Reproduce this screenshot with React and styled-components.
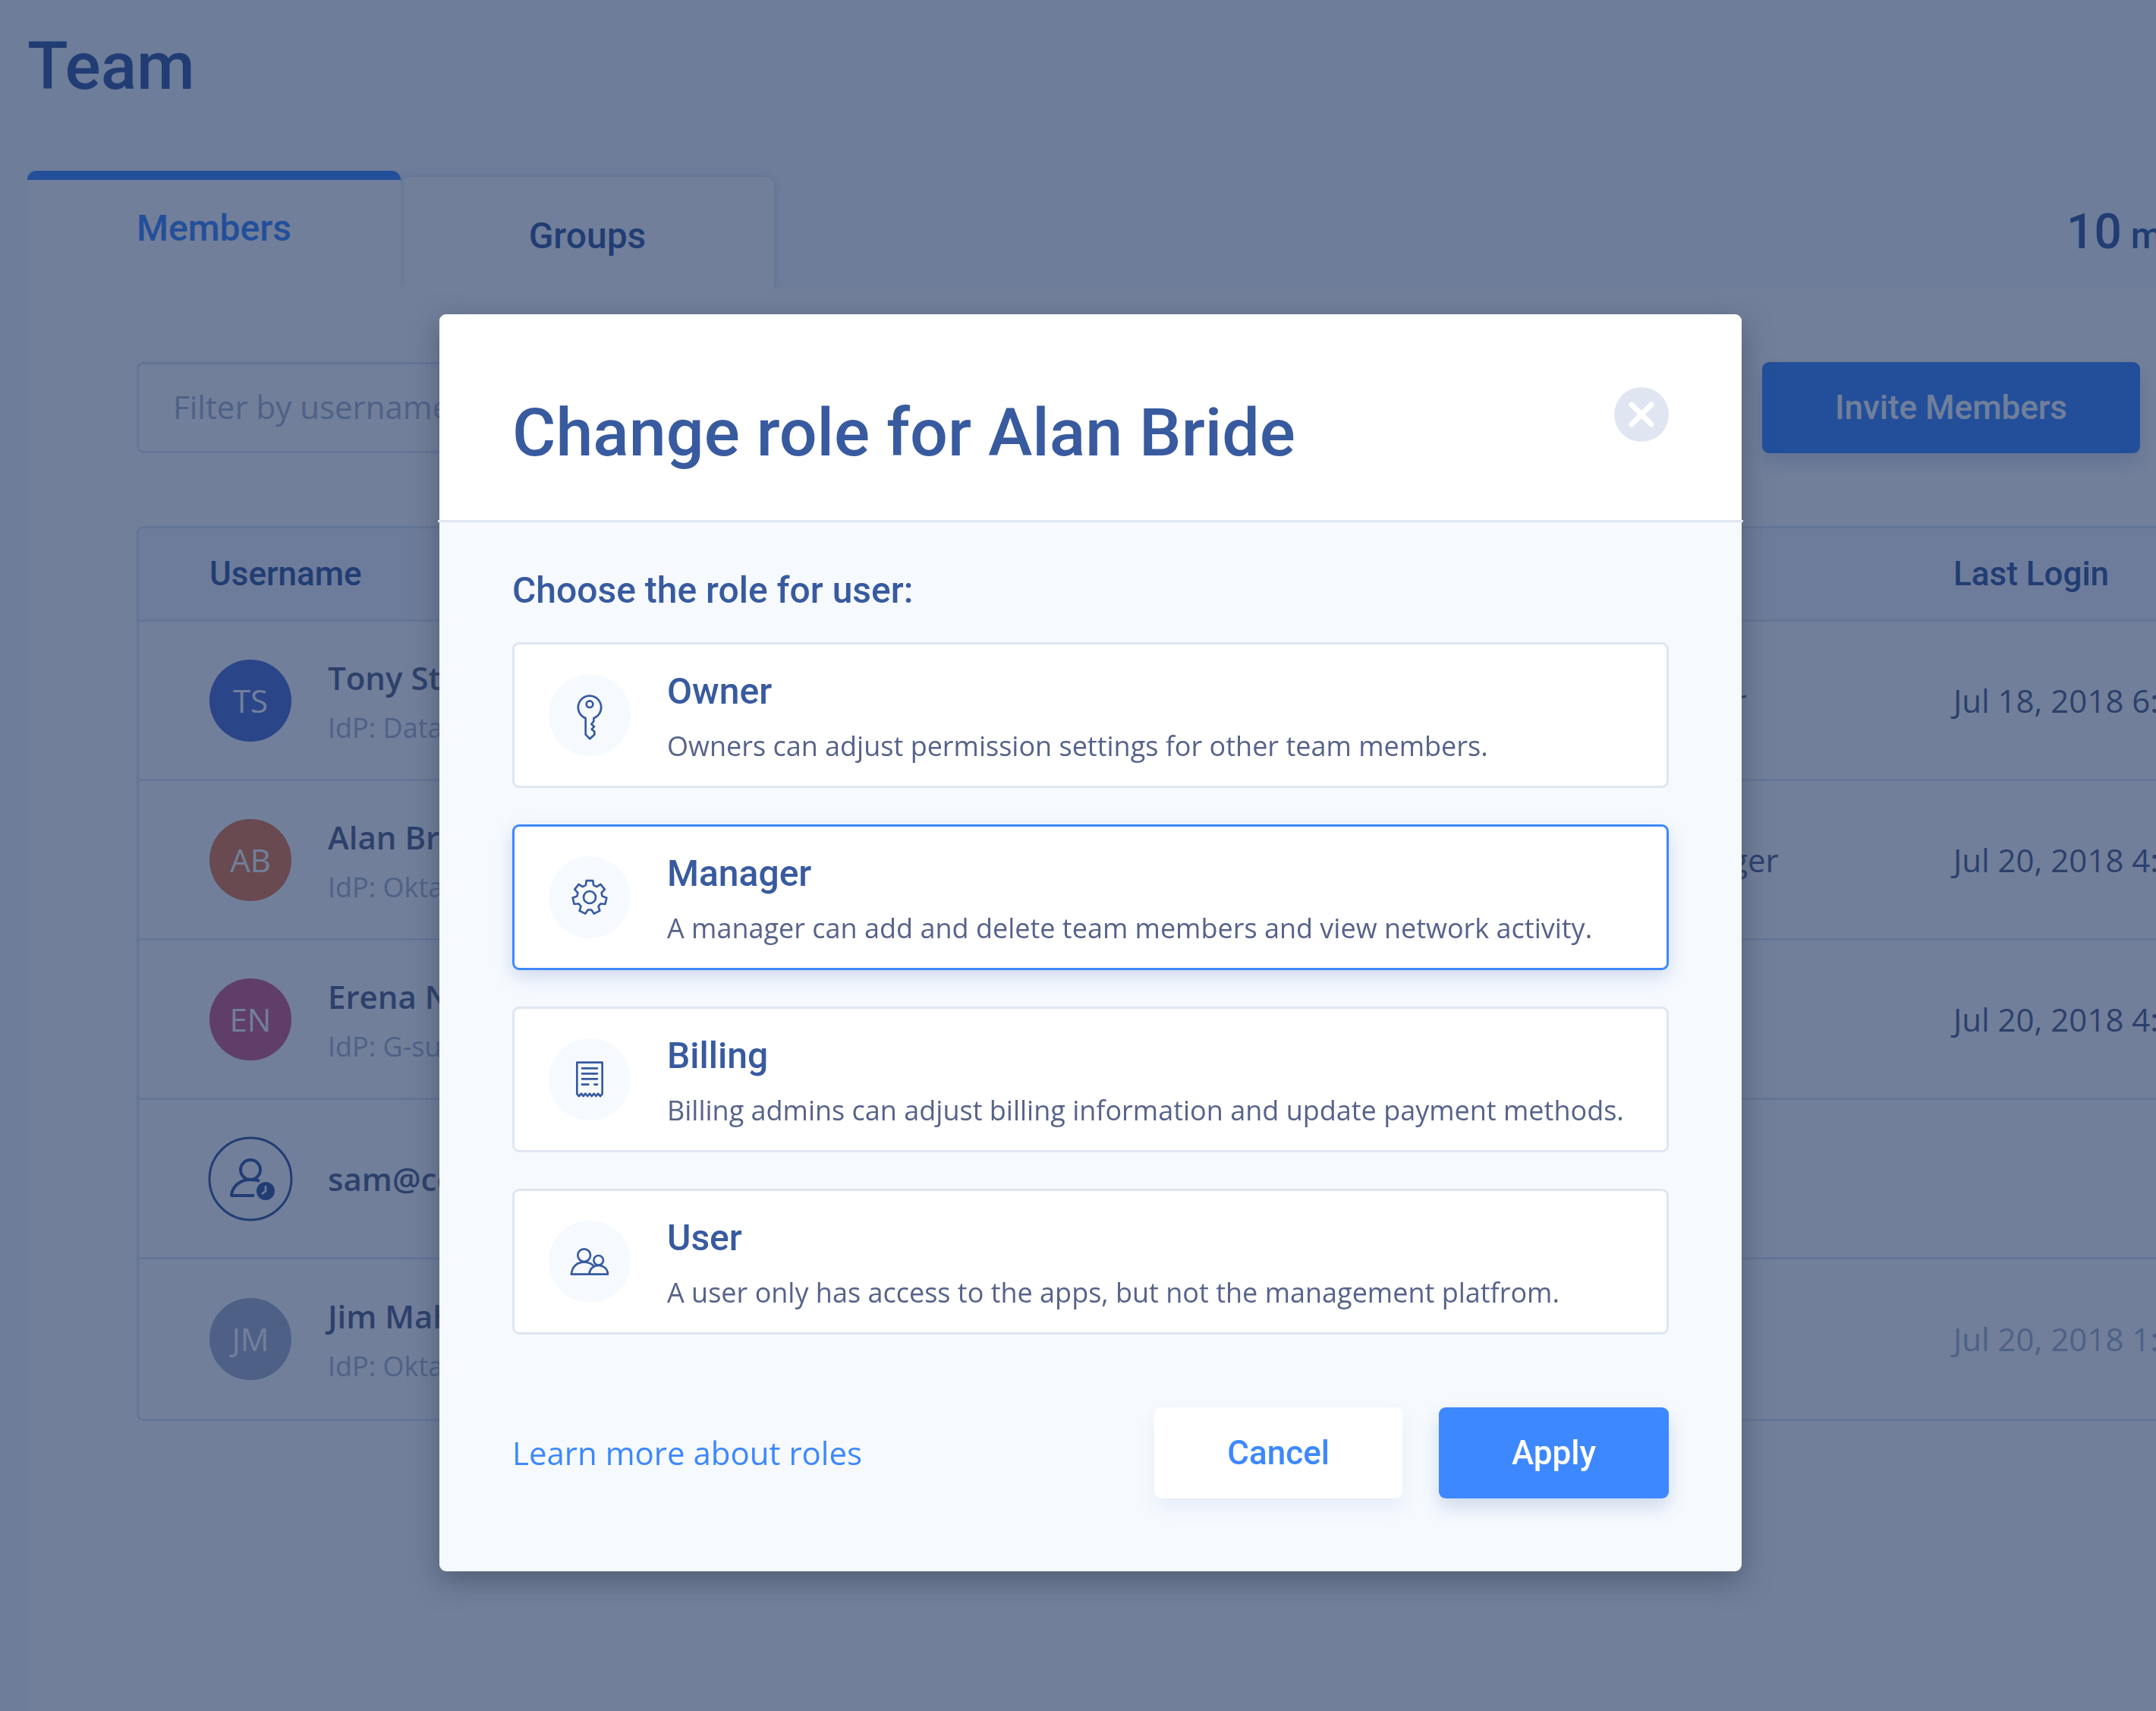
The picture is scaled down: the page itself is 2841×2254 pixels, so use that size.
import React, { useState } from 'react'
import styled, { createGlobalStyle, css } from 'styled-components'

const colors = {
  blue: '#3d88ff',
  navy: '#385a9f',
  text: '#56638a',
  muted: '#abb4ce',
  border: '#dfe6f2',
  pale: '#f6faff',
  white: '#ffffff'
}

const headingFont = "Roboto, 'Liberation Sans', sans-serif"
const bodyFont = "'Open Sans', 'Noto Sans', sans-serif"

const members = [
  { name: 'Tony Stark', initials: 'TS', color: '#526ed4', idp: 'Database', role: 'Owner', login: 'Jul 18, 2018 6:' },
  { name: 'Alan Bride', initials: 'AB', color: '#e87a48', idp: 'Okta', role: 'Manager', login: 'Jul 20, 2018 4:' },
  { name: 'Erena Nile', initials: 'EN', color: '#d45c88', idp: 'G-suite', role: '', login: 'Jul 20, 2018 4:' },
  { name: 'sam@company', pending: true, role: '', login: '' },
  { name: 'Jim Mahn', initials: 'JM', color: '#a8b2cc', idp: 'Okta', role: '', login: 'Jul 20, 2018 1:', inactive: true }
]

// gear outline: seven teeth, each with two outer and two inner corners
const gearPoints = Array.from({ length: 7 })
  .map((_, i) =>
    [[-18, 50], [-11, 67], [11, 67], [18, 50]]
      .map(([offset, radius]) => {
        const angle = (((i * 360) / 7 + offset) * Math.PI) / 180
        return `${(radius * Math.sin(angle)).toFixed(1)},${(-radius * Math.cos(angle)).toFixed(1)}`
      })
      .join(' ')
  )
  .join(' ')

function KeyIcon() {
  return (
    <RoleSvg viewBox="-162 -162 324 324" aria-hidden="true">
      <path d="M-16 12A45.5 45.5 0 1 1 16 12V24L7 36L18 46L8 56L19 65V77L1 94L-16 77Z" />
      <circle cx="0" cy="-43" r="13" />
    </RoleSvg>
  )
}

function GearIcon() {
  return (
    <RoleSvg viewBox="-162 -162 324 324" aria-hidden="true">
      <polygon points={gearPoints} />
      <circle cx="0" cy="0" r="24" />
    </RoleSvg>
  )
}

function ReceiptIcon() {
  return (
    <RoleSvg viewBox="-162 -162 324 324" aria-hidden="true">
      <path d="M-50 57V-67H50V57L42 66L33 56L25 66L17 56L8 66L0 56L-8 66L-17 56L-25 66L-33 56L-42 66Z" />
      <path d="M-30 -44H30M-30 -23H30M-30 -2H30M-30 20H-5M19 20H30" />
    </RoleSvg>
  )
}

function UsersIcon() {
  return (
    <RoleSvg viewBox="-162 -162 324 324" aria-hidden="true">
      <circle cx="-22" cy="-25" r="25" />
      <path d="M-72 50C-70 20 -50 2 -22 2C-8 2 4 6 14 15" />
      <circle cx="35" cy="-5" r="19" />
      <path d="M-2 50C0 28 16 15 35 15C54 15 71 28 72 50H-72" />
    </RoleSvg>
  )
}

function PendingAvatar() {
  return (
    <PendingSvg viewBox="-54 -54 108 108" aria-label="Pending invitation">
      <circle cx="0" cy="0" r="54" strokeWidth="3" />
      <circle cx="0" cy="-12" r="13" />
      <path d="M12 3C8 1 4 1 0 1C-13 1 -24 9 -25 22H5" />
      <circle cx="20" cy="16" r="12" fill={colors.navy} stroke="none" />
      <path d="M20 9V16L15 20" stroke={colors.white} strokeWidth="2.5" />
    </PendingSvg>
  )
}

const roles = [
  { id: 'owner', title: 'Owner', text: 'Owners can adjust permission settings for other team members.', Icon: KeyIcon },
  {
    id: 'manager',
    title: 'Manager',
    text: 'A manager can add and delete team members and view network activity.',
    Icon: GearIcon
  },
  {
    id: 'billing',
    title: 'Billing',
    text: 'Billing admins can adjust billing information and update payment methods.',
    Icon: ReceiptIcon
  },
  {
    id: 'user',
    title: 'User',
    text: 'A user only has access to the apps, but not the management platfrom.',
    Icon: UsersIcon
  }
]

function MembersTable() {
  return (
    <TableFrame>
      <Table>
        <thead>
          <tr>
            <HeadCell>Username</HeadCell>
            <HeadCell width="404px"></HeadCell>
            <HeadCell width="267px">Last Login</HeadCell>
          </tr>
        </thead>
        <tbody>
          {members.map(member => (
            <tr key={member.name}>
              <Cell>
                <Member>
                  {member.pending ? <PendingAvatar /> : <Avatar color={member.color}>{member.initials}</Avatar>}
                  <MemberText>
                    <MemberName>{member.name}</MemberName>
                    {member.idp && <MemberIdp>IdP: {member.idp}</MemberIdp>}
                  </MemberText>
                </Member>
              </Cell>
              <Cell>{member.role}</Cell>
              <Cell $muted={member.inactive}>{member.login}</Cell>
            </tr>
          ))}
        </tbody>
      </Table>
    </TableFrame>
  )
}

function RoleDialog() {
  const [role, setRole] = useState('manager')

  return (
    <Dialog role="dialog" aria-modal="true" aria-labelledby="dialog-title">
      <DialogHeader>
        <DialogTitle id="dialog-title">Change role for Alan Bride</DialogTitle>
        <CloseButton type="button" aria-label="Close">
          <svg viewBox="0 0 72 72" aria-hidden="true">
            <path d="M23 23L49 49M49 23L23 49" />
          </svg>
        </CloseButton>
      </DialogHeader>
      <Divider />
      <DialogBody>
        <Prompt id="role-prompt">Choose the role for user:</Prompt>
        <RoleList role="radiogroup" aria-labelledby="role-prompt">
          {roles.map(({ id, title, text, Icon }) => (
            <RoleCard key={id} $selected={role === id}>
              <RoleInput type="radio" name="role" value={id} checked={role === id} onChange={() => setRole(id)} />
              <RoleCircle>
                <Icon />
              </RoleCircle>
              <RoleText>
                <RoleTitle>{title}</RoleTitle>
                <RoleDescription>{text}</RoleDescription>
              </RoleText>
            </RoleCard>
          ))}
        </RoleList>
        <DialogFooter>
          <LearnMore href="#roles">Learn more about roles</LearnMore>
          <Actions>
            <Button type="button">Cancel</Button>
            <Button type="button" $primary>
              Apply
            </Button>
          </Actions>
        </DialogFooter>
      </DialogBody>
    </Dialog>
  )
}

export default function App() {
  return (
    <>
      <GlobalStyle />
      <Page>
        <PageTitle>Team</PageTitle>
        <TabBar>
          <Tab type="button" $active>
            Members
          </Tab>
          <Tab type="button">Groups</Tab>
          <Counter>
            <CounterValue>10</CounterValue> members
          </Counter>
        </TabBar>
        <Panel>
          <Toolbar>
            <FilterInput type="text" aria-label="Filter members" placeholder="Filter by username" />
            <Button type="button" $primary>
              Invite Members
            </Button>
          </Toolbar>
          <MembersTable />
        </Panel>
      </Page>
      <Overlay>
        <RoleDialog />
      </Overlay>
    </>
  )
}

const GlobalStyle = createGlobalStyle`
  * {
    box-sizing: border-box;
  }
  body {
    margin: 0;
    background-color: ${colors.pale};
    color: ${colors.text};
    font-family: ${bodyFont};
    overflow: hidden;
  }
  button, input {
    font: inherit;
  }
`

const Page = styled.main`
  display: flex;
  flex-direction: column;
  min-height: 100vh;
  padding: 39px 0 0 36px;
  overflow: hidden;
`

const PageTitle = styled.h1`
  margin: 0 0 90px;
  color: ${colors.navy};
  font-family: ${headingFont};
  font-size: 88px;
  font-weight: 500;
  line-height: 96px;
`

const TabBar = styled.div`
  display: flex;
  align-items: flex-end;
`

const Tab = styled.button`
  flex: none;
  width: 492px;
  height: 147px;
  padding: 48px 0 39px;
  border: none;
  border-radius: 12px 12px 0 0;
  background-color: ${colors.white};
  box-shadow: 0 0 12px rgba(56, 90, 159, 0.2);
  color: ${colors.navy};
  font-family: ${headingFont};
  font-size: 48px;
  font-weight: 500;
  line-height: 60px;
  clip-path: inset(-12px -12px 0 0);

  ${props =>
    props.$active &&
    css`
      z-index: 1;
      height: 155px;
      padding: 33px 0 48px;
      border-top: 12px solid ${colors.blue};
      color: ${colors.blue};
      clip-path: inset(0 -12px 0 0);
    `}
`

const Counter = styled.div`
  flex: 0 0 118px;
  align-self: center;
  min-width: 0;
  margin-left: auto;
  padding-top: 12px;
  color: ${colors.navy};
  font-family: ${headingFont};
  font-size: 48px;
  font-weight: 500;
  line-height: 72px;
  white-space: nowrap;
`

const CounterValue = styled.span`
  font-size: 64px;
`

const Panel = styled.section`
  flex: 1;
  padding: 97px 0 96px 144px;
  background-color: ${colors.white};
`

const Toolbar = styled.div`
  display: flex;
  justify-content: space-between;
  margin-bottom: 96px;
  padding-right: 21px;
`

const FilterInput = styled.input`
  width: 50%;
  height: 120px;
  padding: 0 45px 3px;
  border: 3px solid ${colors.border};
  border-radius: 9px;
  background-color: ${colors.white};
  color: ${colors.text};
  font-size: 42px;

  &::placeholder {
    color: ${colors.muted};
    opacity: 1;
  }
`

const Button = styled.button`
  height: 120px;
  padding: 0 96px;
  border: none;
  border-radius: 9px;
  background-color: ${props => (props.$primary ? colors.blue : colors.white)};
  box-shadow: 0 12px 24px ${props => (props.$primary ? 'rgba(56, 90, 159, 0.2)' : 'rgba(56, 90, 159, 0.08)')};
  color: ${props => (props.$primary ? colors.white : colors.blue)};
  font-family: ${headingFont};
  font-size: 44px;
  font-weight: 500;
  line-height: 60px;
  white-space: nowrap;
`

const TableFrame = styled.div`
  border: 3px solid ${colors.border};
  border-right: none;
  border-radius: 9px 0 0 9px;
  overflow: hidden;
`

const Table = styled.table`
  width: 100%;
  border-collapse: separate;
  border-spacing: 0;
  table-layout: fixed;
`

const HeadCell = styled.th`
  width: ${props => props.width || 'auto'};
  height: 120px;
  padding: 0;
  background-color: #f6f8ff;
  color: ${colors.navy};
  font-family: ${headingFont};
  font-size: 44px;
  font-weight: 500;
  line-height: 60px;
  text-align: left;
  white-space: nowrap;

  &:first-child {
    padding-left: 93px;
  }
`

const Cell = styled.td`
  height: 210px;
  padding: 0;
  border-top: 3px solid ${colors.border};
  color: ${props => (props.$muted ? colors.muted : colors.text)};
  font-size: 42px;
  line-height: 60px;
  white-space: nowrap;

  &:first-child {
    padding-left: 93px;
  }

  tr:last-child & {
    height: 213px;
  }
`

const Member = styled.div`
  display: flex;
  align-items: center;
  gap: 48px;
`

const Avatar = styled.div`
  display: flex;
  align-items: center;
  justify-content: center;
  width: 108px;
  height: 108px;
  border-radius: 50%;
  background-color: ${props => props.color};
  color: ${colors.white};
  font-size: 42px;
`

const PendingSvg = styled.svg`
  width: 108px;
  height: 108px;
  overflow: visible;
  fill: none;
  stroke: ${colors.navy};
  stroke-width: 4;
  stroke-linejoin: round;
`

const MemberText = styled.div`
  display: flex;
  flex-direction: column;
  gap: 12px;
`

const MemberName = styled.span`
  font-size: 42px;
  font-weight: 600;
  line-height: 60px;
`

const MemberIdp = styled.span`
  color: ${colors.muted};
  font-size: 36px;
  line-height: 48px;
`

const Overlay = styled.div`
  position: fixed;
  top: 0;
  right: 0;
  bottom: 0;
  left: 0;
  z-index: 2;
  display: flex;
  align-items: flex-start;
  justify-content: center;
  padding: 414px 0 0 33px;
  background-color: rgba(18, 42, 87, 0.6);
`

const Dialog = styled.div`
  width: 100%;
  max-width: 1716px;
  border-radius: 9px;
  background-color: ${colors.pale};
  box-shadow: 0 12px 36px rgba(50, 60, 80, 0.5);
`

const DialogHeader = styled.header`
  display: flex;
  align-items: flex-start;
  justify-content: space-between;
  padding: 96px 96px 67px;
  border-radius: 9px 9px 0 0;
  background-color: ${colors.white};
`

const DialogTitle = styled.h2`
  margin: 12px 0 0;
  color: ${colors.navy};
  font-family: ${headingFont};
  font-size: 88px;
  font-weight: 500;
  line-height: 96px;
`

const CloseButton = styled.button`
  width: 72px;
  height: 72px;
  padding: 0;
  border: none;
  border-radius: 50%;
  background-color: ${colors.border};

  svg {
    display: block;
    fill: none;
    stroke: ${colors.white};
    stroke-width: 7;
    stroke-linecap: round;
  }
`

const Divider = styled.div`
  height: 3px;
  margin: 0 -2px;
  background-color: ${colors.border};
`

const DialogBody = styled.div`
  padding: 60px 96px 96px;
`

const Prompt = styled.p`
  margin: 0 0 38px;
  color: ${colors.navy};
  font-family: ${headingFont};
  font-size: 48px;
  font-weight: 500;
  line-height: 60px;
`

const RoleList = styled.div`
  display: flex;
  flex-direction: column;
  gap: 48px;
`

const RoleCard = styled.label`
  position: relative;
  display: flex;
  align-items: center;
  gap: 48px;
  height: 192px;
  padding: 0 45px;
  border: 3px solid ${props => (props.$selected ? colors.blue : colors.border)};
  border-radius: 9px;
  background-color: ${colors.white};
  box-shadow: ${props => (props.$selected ? '0 9px 24px rgba(56, 90, 159, 0.2)' : 'none')};
  cursor: pointer;
`

const RoleInput = styled.input`
  position: absolute;
  opacity: 0;
`

const RoleCircle = styled.span`
  flex: none;
  width: 108px;
  height: 108px;
  border-radius: 50%;
  background-color: ${colors.pale};
`

const RoleSvg = styled.svg`
  display: block;
  fill: none;
  stroke: ${colors.navy};
  stroke-width: 8;
  stroke-linecap: round;
  stroke-linejoin: round;
`

const RoleText = styled.span`
  display: flex;
  flex-direction: column;
  gap: 18px;
  padding-top: 3px;
`

const RoleTitle = styled.span`
  color: ${colors.navy};
  font-family: ${headingFont};
  font-size: 48px;
  font-weight: 500;
  line-height: 60px;
`

const RoleDescription = styled.span`
  font-size: 36px;
  line-height: 48px;
  white-space: nowrap;
`

const DialogFooter = styled.footer`
  display: flex;
  align-items: center;
  justify-content: space-between;
  margin-top: 96px;
`

const LearnMore = styled.a`
  color: ${colors.blue};
  font-size: 42px;
  line-height: 60px;
  text-decoration: none;
`

const Actions = styled.div`
  display: flex;
  gap: 48px;
`
